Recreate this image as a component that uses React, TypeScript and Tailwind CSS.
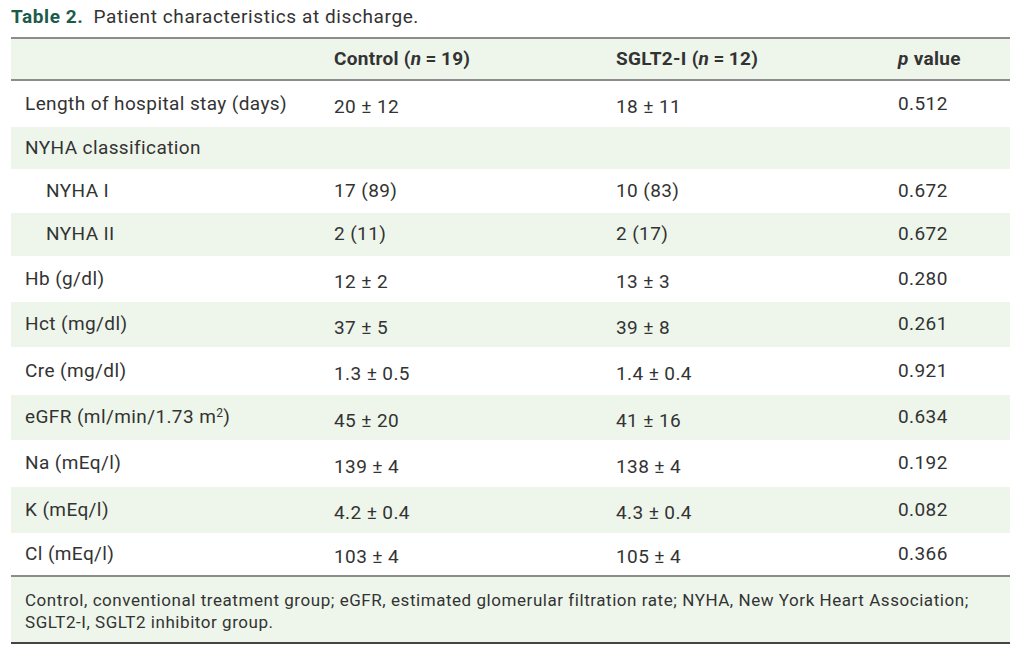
type Row = {
  label: React.ReactNode;
  control: string;
  sglt: string;
  p: string;
  h: string;
  shade?: boolean;
  indent?: boolean;
  pm?: boolean;
};

const rows: Row[] = [
  { label: "Length of hospital stay (days)", control: "20 ± 12", sglt: "18 ± 11", p: "0.512", h: "h-[46px]", pm: true },
  { label: "NYHA classification", control: "", sglt: "", p: "", h: "h-[42px]", shade: true },
  { label: "NYHA I", control: "17 (89)", sglt: "10 (83)", p: "0.672", h: "h-[44px]", indent: true },
  { label: "NYHA II", control: "2 (11)", sglt: "2 (17)", p: "0.672", h: "h-[43px]", indent: true, shade: true },
  { label: "Hb (g/dl)", control: "12 ± 2", sglt: "13 ± 3", p: "0.280", h: "h-[46px]", pm: true },
  { label: "Hct (mg/dl)", control: "37 ± 5", sglt: "39 ± 8", p: "0.261", h: "h-[45px]", shade: true, pm: true },
  { label: "Cre (mg/dl)", control: "1.3 ± 0.5", sglt: "1.4 ± 0.4", p: "0.921", h: "h-[48px]", pm: true },
  {
    label: (
      <>
        eGFR (ml/min/1.73 m<sup className="text-[12px]">2</sup>)
      </>
    ),
    control: "45 ± 20",
    sglt: "41 ± 16",
    p: "0.634",
    h: "h-[45px]",
    shade: true,
    pm: true,
  },
  { label: "Na (mEq/l)", control: "139 ± 4", sglt: "138 ± 4", p: "0.192", h: "h-[47px]", pm: true },
  { label: "K (mEq/l)", control: "4.2 ± 0.4", sglt: "4.3 ± 0.4", p: "0.082", h: "h-[46px]", shade: true, pm: true },
  { label: "Cl (mEq/l)", control: "103 ± 4", sglt: "105 ± 4", p: "0.366", h: "h-[42px]", pm: true },
];

const cols = "grid grid-cols-[323px_282px_282px_112px]";

export default function App() {
  return (
    <div className="w-[1024px] h-[654px] bg-white text-[#333] font-['Roboto',sans-serif] pl-[11px] pt-[5px]">
      <div className="w-[999px]">
        <div className="text-[19px] leading-[24px] mb-[8px] tracking-[0.6px]">
          <span className="font-bold text-[#1b5c49]">Table 2.</span>
          <span className="ml-[10px]">Patient characteristics at discharge.</span>
        </div>

        <div className={`${cols} h-[44px] bg-[#eef6eb] border-y-2 border-[#8c8c8c] text-[19px] tracking-[0.3px] font-bold items-center`}>
          <div />
          <div>
            Control (<i>n</i>{"\u2009=\u2009"}19)
          </div>
          <div>
            SGLT2-I (<i>n</i>{"\u2009=\u2009"}12)
          </div>
          <div>
            <i>p</i> value
          </div>
        </div>

        {rows.map((r, i) => (
          <div key={i} className={`${cols} ${r.h} ${r.shade ? "bg-[#eef6eb]" : ""} text-[19px] tracking-[0.4px] items-center`}>
            <div className={r.indent ? "pl-[35px]" : "pl-[14px]"}>{r.label}</div>
            <div className={r.pm ? "pt-[7px]" : ""}>{r.control}</div>
            <div className={r.pm ? "pt-[7px]" : ""}>{r.sglt}</div>
            <div>{r.p}</div>
          </div>
        ))}

        <div className="bg-[#eef6eb] border-t-2 border-[#8c8c8c] border-b-2 border-b-[#444] h-[69px] pl-[14px] pt-[12px] text-[17px] leading-[22px] tracking-[0.55px]">
          <p>
            Control, conventional treatment group; eGFR, estimated glomerular filtration rate; NYHA, New York Heart Association;
          </p>
          <p>SGLT2-I, SGLT2 inhibitor group.</p>
        </div>
      </div>
    </div>
  );
}
